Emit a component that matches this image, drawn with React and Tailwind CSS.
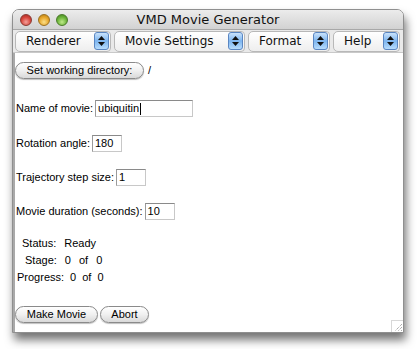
import React from "react";

function Stepper() {
  return (
    <div className="w-[15px] h-[18px] rounded-[3px] border border-[#5a86c2] bg-gradient-to-b from-[#c9e2fb] via-[#7db5ef] to-[#b7dcfc] flex flex-col items-center justify-center gap-[2px]">
      <svg width="7" height="4" viewBox="0 0 7 4"><path d="M3.5 0L7 4H0z" fill="#111" /></svg>
      <svg width="7" height="4" viewBox="0 0 7 4"><path d="M0 0H7L3.5 4z" fill="#111" /></svg>
    </div>
  );
}

function MenuButton({ label, width }) {
  return (
    <div className={`${width} h-[21px] flex items-center justify-between pl-[10px] pr-[1px] rounded-l-[5px] rounded-r-[4px] border border-[#b8b8b8] bg-gradient-to-b from-[#ffffff] to-[#eeeeee] text-[12px] text-[#111]`} style={{ fontFamily: '"DejaVu Sans", sans-serif' }}>
      <span>{label}</span>
      <Stepper />
    </div>
  );
}

function Input({ value, width, caret }) {
  return (
    <div className={`${width} h-[17px] border border-[#c8c8c8] border-t-[#8a8a8a] border-l-[#9a9a9a] bg-white flex items-center pl-[2px] text-[11px] leading-none`}>
      {value}
      {caret && <span className="inline-block w-[1px] h-[12px] bg-black ml-[1px]" />}
    </div>
  );
}

function AquaButton({ label, width }) {
  return (
    <div className={`${width} h-[17px] rounded-full border border-[#8a8a8a] bg-gradient-to-b from-[#ffffff] via-[#f0f0f0] to-[#d9d9d9] flex items-center justify-center text-[11px] leading-none shadow-[0_1px_1px_rgba(0,0,0,0.25)]`}>
      {label}
    </div>
  );
}

export default function App() {
  return (
    <div className="w-[417px] h-[349px] bg-white pl-[12px] pt-[9px]" style={{ fontFamily: '"Liberation Sans", Arial, sans-serif' }}>
      <div className="w-[392px] h-[324px] flex flex-col rounded-t-[7px] border border-[#8f8f8f] shadow-[2px_7px_10px_rgba(0,0,0,0.55)] bg-white overflow-hidden">
        {/* title bar */}
        <div className="h-[20px] shrink-0 flex items-center relative bg-gradient-to-b from-[#ececec] to-[#d2d2d2] border-b border-[#a8a8a8]">
          <div className="flex items-center gap-[6px] pl-[7px]">
            <div className="w-[12px] h-[12px] rounded-full border border-[#8a3a32] bg-[radial-gradient(circle_at_50%_70%,#f4a09a,#d6443a_55%,#9e2a22)]" />
            <div className="w-[12px] h-[12px] rounded-full border border-[#9a7020] bg-[radial-gradient(circle_at_50%_70%,#fbe08a,#e7a62a_55%,#b07a12)]" />
            <div className="w-[12px] h-[12px] rounded-full border border-[#4a7a2a] bg-[radial-gradient(circle_at_50%_70%,#bfea8a,#6cb43a_55%,#3e7e1c)]" />
          </div>
          <div className="absolute inset-0 flex items-center justify-center text-[13px] text-[#111] pointer-events-none" style={{ fontFamily: '"DejaVu Sans", sans-serif' }}>
            VMD Movie Generator
          </div>
        </div>
        {/* menu row */}
        <div className="h-[23px] shrink-0 flex items-center gap-[3px] px-[2px] bg-[#e9e9e9] border-b border-[#c9c9c9]">
          <MenuButton label="Renderer" width="w-[96px]" />
          <MenuButton label="Movie Settings" width="w-[131px]" />
          <MenuButton label="Format" width="w-[82px]" />
          <MenuButton label="Help" width="w-[67px]" />
        </div>
        {/* content */}
        <div className="flex-1 flex flex-col border-l-2 border-[#a9a9a9] relative text-[11px] text-black">
          <div className="h-[17px] flex items-center gap-[4px] mt-[9px]">
            <AquaButton label="Set working directory:" width="w-[129px]" />
            <span>/</span>
          </div>
          <div className="h-[17px] flex items-center gap-[2px] mt-[21px] pl-[1px]">
            <span>Name of movie:</span>
            <Input value="ubiquitin" width="w-[98px]" caret />
          </div>
          <div className="h-[17px] flex items-center gap-[2px] mt-[18px] pl-[1px]">
            <span>Rotation angle:</span>
            <Input value="180" width="w-[30px]" />
          </div>
          <div className="h-[17px] flex items-center gap-[2px] mt-[17px] pl-[1px]">
            <span>Trajectory step size:</span>
            <Input value="1" width="w-[30px]" />
          </div>
          <div className="h-[17px] flex items-center gap-[2px] mt-[17px] pl-[1px]">
            <span>Movie duration (seconds):</span>
            <Input value="10" width="w-[30px]" />
          </div>
          <div className="flex flex-col mt-[15px] leading-[17px]">
            <div className="flex pl-[7px] gap-[8px]">
              <span>Status:</span>
              <span>Ready</span>
            </div>
            <div className="flex pl-[10px] gap-[8px]">
              <span>Stage:</span>
              <span>0</span>
              <span>of</span>
              <span>0</span>
            </div>
            <div className="flex pl-[2px] gap-[6px]">
              <span>Progress:</span>
              <span>0</span>
              <span>of</span>
              <span>0</span>
            </div>
          </div>
          <div className="h-[17px] flex items-center gap-[2px] mt-[20px]">
            <AquaButton label="Make Movie" width="w-[83px]" />
            <AquaButton label="Abort" width="w-[49px]" />
          </div>
          <div className="absolute right-0 bottom-0 w-[12px] h-[12px] border-l border-t border-[#d8d8d8]">
            <svg width="11" height="11" viewBox="0 0 11 11">
              <path d="M10 3L3 10M10 6L6 10M10 9L9 10" stroke="#8a8a8a" strokeWidth="1" strokeDasharray="1 1" />
            </svg>
          </div>
        </div>
      </div>
    </div>
  );
}
